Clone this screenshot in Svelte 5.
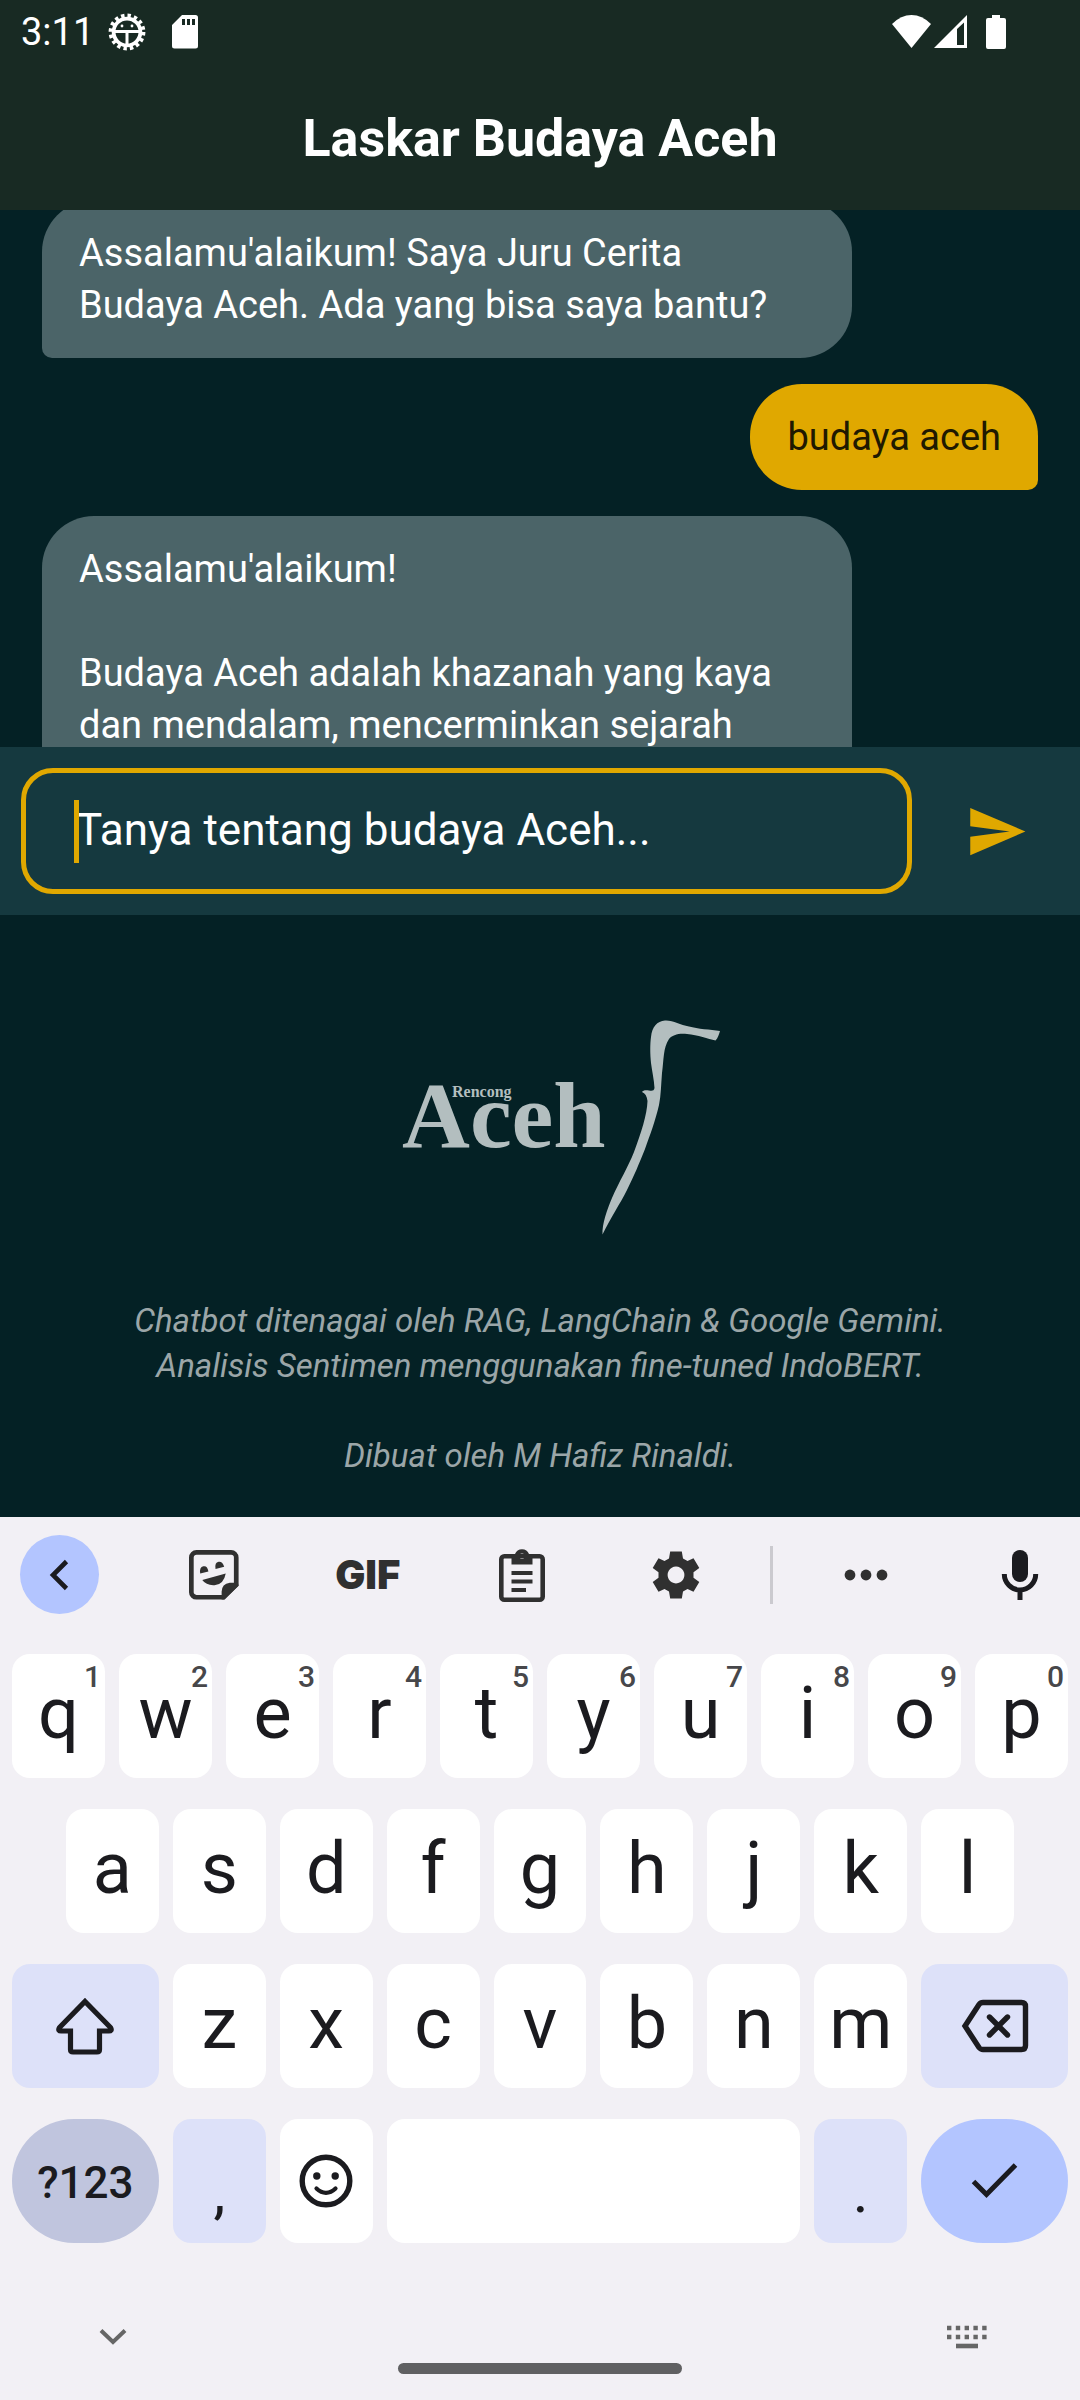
<script>
  import { onMount } from 'svelte';

  const messages = [
    { from: 'bot', paragraphs: ["Assalamu'alaikum! Saya Juru Cerita Budaya Aceh. Ada yang bisa saya bantu?"] },
    { from: 'user', paragraphs: ['budaya aceh'] },
    {
      from: 'bot',
      paragraphs: ["Assalamu'alaikum!", 'Budaya Aceh adalah khazanah yang kaya dan mendalam, mencerminkan sejarah']
    }
  ];

  const topRow = [...'qwertyuiop'].map((letter, i) => ({ letter, hint: String((i + 1) % 10) }));
  const middleRow = [...'asdfghjkl'];
  const bottomRow = [...'zxcvbnm'];

  let question = '';
  let log;

  onMount(() => {
    log.scrollTop = 26;
  });

  function type(char) {
    question += char;
  }
</script>

<div class="screen">
  <header>
    <div class="status">
      <span class="time">3:11</span>
      <svg class="debug" width="38" height="38" viewBox="-19 -19 38 38" aria-hidden="true">
        <circle r="13.400" fill="none" stroke="#fff" stroke-width="3.800" />
        <circle r="16.400" fill="none" stroke="#fff" stroke-width="4" stroke-dasharray="3.400 3.040" />
        <path d="M-13-.6H13M0 0V14" stroke="#fff" stroke-width="3" />
        <circle cx="-5" cy="-6" r="1.4" fill="#fff" />
        <circle cx="5" cy="-6" r="1.4" fill="#fff" />
      </svg>
      <svg class="card" width="26" height="34" viewBox="0 0 26 34" aria-hidden="true">
        <path fill="#fff" fill-rule="evenodd" d="M10 0H23.500a2.500 2.500 0 0 1 2.500 2.500V31a2.500 2.500 0 0 1-2.500 2.500H2.500A2.500 2.500 0 0 1 0 31V10ZM10 4V10H13V4ZM15 4V10H18V4ZM20 4V10H23V4Z" />
      </svg>
      <span class="signals">
        <svg width="40" height="34" viewBox="0 0 40 34" aria-hidden="true">
          <path fill="#fff" d="M0 9Q9 0 19.500 0T39 9L19.500 33Z" />
        </svg>
        <svg width="34" height="34" viewBox="0 0 34 34" aria-hidden="true">
          <path fill="#fff" fill-rule="evenodd" d="M0 33 33 0V33ZM23 14V30H30V7.500Z" />
        </svg>
        <svg class="battery" width="20" height="34" viewBox="0 0 20 34" aria-hidden="true">
          <path fill="#fff" d="M6 0H14V3H18a2 2 0 0 1 2 2V32a2 2 0 0 1-2 2H2a2 2 0 0 1-2-2V5a2 2 0 0 1 2-2H6Z" />
        </svg>
      </span>
    </div>
    <h1>Laskar Budaya Aceh</h1>
  </header>

  <main>
    <div class="log" bind:this={log}>
      {#each messages as message}
        <div class="bubble {message.from}">
          {#each message.paragraphs as paragraph}
            <p>{paragraph}</p>
          {/each}
        </div>
      {/each}
    </div>

    <form class="composer" on:submit|preventDefault>
      <div class="field">
        <input type="text" aria-label="Tanya tentang budaya Aceh" placeholder="Tanya tentang budaya Aceh..." bind:value={question} />
        {#if !question}<span class="caret"></span>{/if}
      </div>
      <button class="send" type="submit" aria-label="Kirim">
        <svg width="63" height="63" viewBox="0 0 24 24" aria-hidden="true">
          <path fill="#e0a800" d="M2.010 21 23 12 2.010 3 2 10l15 2-15 2z" />
        </svg>
      </button>
    </form>

    <footer>
      <svg class="logo" width="320" height="216" viewBox="22 19 320 216" role="img" aria-label="Rencong Aceh">
        <g fill="#b3bebf">
          <text class="brand" x="22" y="146">Aceh</text>
          <text class="brand-small" x="72" y="96">Rencong</text>
          <path d="M340 30C339 33 338 37 335.500 39.500C328 38 318 34 307 33C299 32 292 34 289 38C283 47 284 58 282 72C281 84 281 94 279 104C275 121 270 134 265 148C259 163 254 175 247 189C240 203 231 216 222.500 233.500C222 223 227 209 232 197C239 181 248 166 254 151C261 132 267 114 267.500 100C267 95 265 92 262 91C263 89 266 89 269 89.500C272 90 274 90 274.500 87C274 78 272 70 271 62C270 53 270 43 271 36C272 26 277 20 285 19.500C293 19 300 24 309 25.500C318 28 330 28.500 340 30Z" />
        </g>
      </svg>
      <p>
        Chatbot ditenagai oleh RAG, LangChain &amp; Google Gemini.<br />
        Analisis Sentimen menggunakan fine-tuned IndoBERT.
      </p>
      <p>Dibuat oleh M Hafiz Rinaldi.</p>
    </footer>
  </main>

  <section class="keyboard" aria-label="Keyboard">
    <div class="tools">
      <button class="tool back" aria-label="Kembali">
        <svg width="24" height="36" viewBox="0 0 24 36" aria-hidden="true">
          <path d="M18.500 4.500 5 18 18.500 31.500" fill="none" stroke="#1b1b1f" stroke-width="4.600" />
        </svg>
      </button>
      <button class="tool" aria-label="Stiker">
        <svg width="50" height="50" viewBox="0 0 49 49" aria-hidden="true">
          <path d="M33.500 46.300H7.300a5 5 0 0 1-5-5V7.300a5 5 0 0 1 5-5H41.300a5 5 0 0 1 5 5V34Z" fill="none" stroke="#303030" stroke-width="4.600" />
          <path d="M48 32H40Q32 33 32 41V48.500H35L48.500 35Z" fill="#303030" />
          <path d="M11 23Q10 17 14 16T19 21ZM26 18.500Q25 12 29 11.500T34.500 16.500ZM13 29.500 36 23Q34 34 25 34.500Q17 35 13 29.500Z" fill="#303030" />
        </svg>
      </button>
      <button class="tool gif">GIF</button>
      <button class="tool" aria-label="Papan klip">
        <svg width="46" height="54" viewBox="0 0 46 54" aria-hidden="true">
          <rect x="2.300" y="8.300" width="41.400" height="43.400" rx="3" fill="none" stroke="#303030" stroke-width="4.600" />
          <path fill="#303030" fill-rule="evenodd" d="M12.500 6H16A7.500 7.500 0 0 1 30 6H33.500V16.500H12.500ZM23 5.500a2.800 2.800 0 1 0 .01 0Z" />
          <path d="M12.500 25H33.500M12.500 33.500H33.500M12.500 42H27" stroke="#303030" stroke-width="4.200" />
        </svg>
      </button>
      <button class="tool" aria-label="Setelan">
        <svg width="48" height="48" viewBox="-24 -24 48 48" aria-hidden="true">
          <path fill="#303030" fill-rule="evenodd" d="M-5.800-23.600H5.800L7-16.500 11.500-14 17.500-16.700 23.300-7 17.500-2.700V2.700L23.300 7 17.500 16.700 11.500 14 7 16.500 5.800 23.600H-5.800L-7 16.500-11.500 14-17.500 16.700-23.300 7-17.500 2.700V-2.700L-23.300-7-17.500-16.700-11.500-14-7-16.500ZM0-8.400a8.400 8.400 0 1 0 .01 0Z" />
        </svg>
      </button>
      <span class="divider"></span>
      <button class="tool" aria-label="Lainnya">
        <svg width="44" height="12" viewBox="0 0 44 12" aria-hidden="true" fill="#303030">
          <circle cx="6" cy="6" r="5.400" /><circle cx="22" cy="6" r="5.400" /><circle cx="38" cy="6" r="5.400" />
        </svg>
      </button>
      <button class="tool" aria-label="Input suara">
        <svg width="38" height="52" viewBox="0 0 38 52" aria-hidden="true">
          <rect x="11" y="1" width="16" height="32" rx="8" fill="#1b1b1f" />
          <path d="M3.300 25a15.700 16 0 0 0 31.400 0M19 41V51" fill="none" stroke="#1b1b1f" stroke-width="5" />
        </svg>
      </button>
    </div>

    <div class="keys">
      <div class="row">
        {#each topRow as key}
          <button class="key" on:click={() => type(key.letter)}>{key.letter}<small>{key.hint}</small></button>
        {/each}
      </div>
      <div class="row inset">
        {#each middleRow as letter}
          <button class="key" on:click={() => type(letter)}>{letter}</button>
        {/each}
      </div>
      <div class="row">
        <button class="key icon wide soft" aria-label="Shift">
          <svg width="60" height="60" viewBox="0 0 60 60" aria-hidden="true">
            <path d="M30 5.500 55.500 31.500Q57.500 35 54 35H44.500V53.500Q44.500 56 42 56H18Q15.500 56 15.500 53.500V35H6Q2.500 35 4.500 31.500Z" fill="none" stroke="#1b1b1f" stroke-width="5.200" />
          </svg>
        </button>
        {#each bottomRow as letter}
          <button class="key" on:click={() => type(letter)}>{letter}</button>
        {/each}
        <button class="key icon wide soft" aria-label="Hapus" on:click={() => (question = question.slice(0, -1))}>
          <svg width="68" height="54" viewBox="0 0 68 54" aria-hidden="true" fill="none" stroke="#1b1b1f" stroke-width="5.400">
            <path d="M22 3.500H60.500Q64.500 3.500 64.500 7.500V46.500Q64.500 50.500 60.500 50.500H22Q19.500 50.500 18 48.500L4 27 18 5.500Q19.500 3.500 22 3.500Z" />
            <path d="M28.500 18 46.500 36M46.500 18 28.500 36" stroke-linecap="round" />
          </svg>
        </button>
      </div>
      <div class="row">
        <button class="key icon wide mode">?123</button>
        <button class="key soft mark" on:click={() => type(',')}>,</button>
        <button class="key icon" aria-label="Emoji">
          <svg width="54" height="54" viewBox="-27 -27 54 54" aria-hidden="true">
            <circle r="23.800" fill="none" stroke="#1b1b1f" stroke-width="5.400" />
            <circle cx="-9.200" cy="-5" r="3.700" fill="#1b1b1f" /><circle cx="9.200" cy="-5" r="3.700" fill="#1b1b1f" />
            <path d="M-9.500 7.500Q-5 11.800 0 11.800T9.500 7.500" fill="none" stroke="#1b1b1f" stroke-width="4.200" stroke-linecap="round" />
          </svg>
        </button>
        <button class="key space" aria-label="Spasi" on:click={() => type(' ')}></button>
        <button class="key soft mark" on:click={() => type('.')}>.</button>
        <button class="key icon wide enter" aria-label="Selesai">
          <svg width="50" height="38" viewBox="0 0 50 38" aria-hidden="true">
            <path d="M3.500 19.500 16.500 32.500 45.500 3" fill="none" stroke="#1b1b1f" stroke-width="5" />
          </svg>
        </button>
      </div>
    </div>

    <div class="nav">
      <button aria-label="Sembunyikan keyboard">
        <svg width="28" height="18" viewBox="0 0 28 18" aria-hidden="true">
          <path d="M2 2.500 14 14 26 2.500" fill="none" stroke="#666" stroke-width="4" />
        </svg>
      </button>
      <button aria-label="Ganti keyboard">
        <svg width="42" height="24" viewBox="0 0 42 24" aria-hidden="true">
          <path d="M1 3H42M1 12H42" stroke="#666" stroke-width="4.600" stroke-dasharray="4.400 4.400" />
          <path d="M10 21H32" stroke="#666" stroke-width="4.600" />
        </svg>
      </button>
    </div>
    <div class="handle"></div>
  </section>
</div>

<style>
  :global(body) {
    background: #042125;
  }
  .screen {
    display: flex;
    flex-direction: column;
    min-height: 100vh;
    color: #fff;
    font-family: Roboto, 'Liberation Sans', sans-serif;
    background: #042125;
  }
  button {
    display: flex;
    align-items: center;
    justify-content: center;
    padding: 0;
    border: 0;
    background: none;
    color: inherit;
    font-family: inherit;
    cursor: pointer;
  }
  svg {
    display: block;
    flex: none;
  }

  header {
    background: #182a23;
  }
  .status {
    display: flex;
    align-items: center;
    box-sizing: border-box;
    height: 66px;
    padding: 0 74px 2px 21px;
  }
  .time {
    font-size: 38px;
    line-height: 44px;
  }
  .debug {
    margin-left: 14px;
  }
  .card {
    margin-left: 26px;
  }
  .signals {
    display: flex;
    gap: 2px;
    margin-left: auto;
  }
  .battery {
    margin-left: 16px;
  }
  h1 {
    margin: 0;
    padding-top: 2px;
    font-size: 52px;
    font-weight: 700;
    line-height: 142px;
    text-align: center;
  }

  main {
    display: flex;
    flex: 1;
    flex-direction: column;
  }
  .log {
    display: flex;
    flex: 1 1 0;
    flex-direction: column;
    gap: 26px;
    box-sizing: border-box;
    min-height: 400px;
    max-height: 537px;
    padding: 16px 42px;
    overflow-y: auto;
    scrollbar-width: none;
  }
  .bubble {
    flex: none;
    box-sizing: border-box;
    max-width: 810px;
    padding: 27px 37px;
    font-size: 38px;
    line-height: 52px;
  }
  .bubble p {
    margin: 0;
  }
  .bubble p + p {
    margin-top: 52px;
  }
  .bot {
    align-self: flex-start;
    width: 82%;
    border-radius: 52px 52px 52px 10px;
    background: #4b6468;
  }
  .bot:last-child {
    padding-bottom: 80px;
  }
  .user {
    align-self: flex-end;
    border-radius: 52px 52px 10px 52px;
    color: #201900;
    background: #e0a800;
  }

  .composer {
    display: flex;
    align-items: center;
    padding: 21px 0 21px 21px;
    background: #15393f;
  }
  .field {
    position: relative;
    display: flex;
    flex: 1;
    align-items: center;
    box-sizing: border-box;
    height: 126px;
    padding: 0 48px;
    border: 5px solid #e0a800;
    border-radius: 32px;
  }
  input {
    width: 100%;
    padding: 0 0 2px 2px;
    border: 0;
    outline: 0;
    color: #fff;
    background: none;
    font-family: inherit;
    font-size: 44px;
    line-height: 56px;
  }
  input::placeholder {
    color: #fff;
    opacity: 1;
  }
  .caret {
    position: absolute;
    left: 48px;
    width: 5px;
    height: 63px;
    background: #e0a800;
  }
  .send {
    width: 168px;
    height: 126px;
  }

  footer {
    display: flex;
    flex-direction: column;
    align-items: center;
    padding: 105px 40px 39px;
    color: #9ba6a8;
    font-size: 33px;
    font-style: italic;
    line-height: 45px;
    text-align: center;
  }
  .logo {
    margin: 0 0 62px 44px;
  }
  .brand,
  .brand-small {
    font-family: 'Liberation Serif', serif;
    font-style: normal;
    font-weight: 700;
  }
  .brand {
    font-size: 94px;
  }
  .brand-small {
    font-size: 16px;
  }
  footer p {
    margin: 0;
  }
  footer p + p {
    margin-top: 45px;
  }

  .keyboard {
    color: #1b1b1f;
    background: #f2f0f5;
  }
  .tools {
    display: flex;
    align-items: center;
    justify-content: space-between;
    padding: 18px 20px 40px;
  }
  .tool {
    width: 79px;
    height: 79px;
  }
  .back {
    border-radius: 50%;
    background: #b3c5ff;
  }
  .gif {
    color: #303030;
    font-family: Inter, sans-serif;
    font-size: 40px;
    font-weight: 900;
  }
  .divider {
    width: 3px;
    height: 58px;
    margin: 0 -21px;
    background: #cbcacf;
  }
  .keys {
    display: flex;
    flex-direction: column;
    gap: 31px;
    padding: 0 12px;
  }
  .row {
    display: flex;
    gap: 14px;
  }
  .inset {
    padding: 0 54px;
  }
  .key {
    position: relative;
    flex: 93 1 0;
    min-width: 0;
    height: 124px;
    padding-bottom: 4px;
    border-radius: 18px;
    background: #fff;
    font-size: 72px;
    line-height: 82px;
  }
  .key small {
    position: absolute;
    top: 5px;
    right: 4px;
    color: #47474a;
    font-size: 30px;
    font-weight: 500;
    line-height: 36px;
  }
  .icon {
    padding-bottom: 0;
  }
  .wide {
    flex-grow: 147;
  }
  .space {
    flex-grow: 414;
  }
  .soft {
    background: #dde1f9;
  }
  .mode {
    padding-top: 3px;
    border-radius: 62px;
    background: #c0c5de;
    font-size: 44px;
    font-weight: 500;
  }
  .mark {
    padding: 22px 0 0;
    font-size: 60px;
  }
  .enter {
    border-radius: 62px;
    background: #b3c5ff;
  }

  .nav {
    display: flex;
    justify-content: space-between;
    padding: 72px 80px 0;
  }
  .nav button {
    width: 66px;
    height: 44px;
  }
  .handle {
    width: 284px;
    height: 11px;
    margin: 4px auto 26px;
    border-radius: 6px;
    background: #606062;
  }
</style>
